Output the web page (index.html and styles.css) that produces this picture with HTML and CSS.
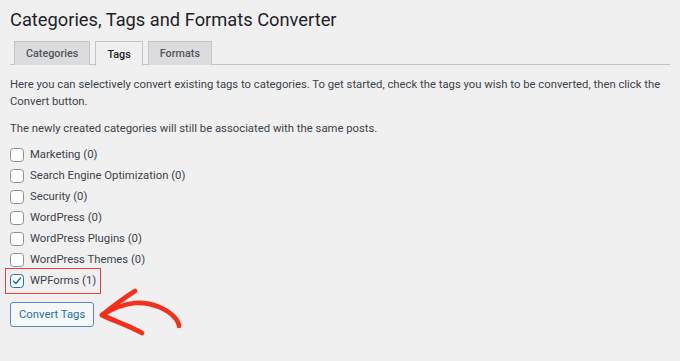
FILE: index.html
```html
<!DOCTYPE html>
<html lang="en">
<head>
<meta charset="utf-8">
<title>Categories, Tags and Formats Converter</title>
<link rel="stylesheet" href="styles.css">
</head>
<body>
<div class="wrap">
  <h1 class="title">Categories, Tags and Formats Converter</h1>
  <nav class="tabs">
    <a class="tab">Categories</a>
    <a class="tab active">Tags</a>
    <a class="tab">Formats</a>
  </nav>
  <p class="intro">Here you can selectively convert existing tags to categories. To get started, check the tags you wish to be converted, then click the Convert button.</p>
  <p class="note">The newly created categories will still be associated with the same posts.</p>
  <ul class="list">
    <li class="item"><span class="box"></span><span>Marketing (0)</span></li>
    <li class="item"><span class="box"></span><span>Search Engine Optimization (0)</span></li>
    <li class="item"><span class="box"></span><span>Security (0)</span></li>
    <li class="item"><span class="box"></span><span>WordPress (0)</span></li>
    <li class="item"><span class="box"></span><span>WordPress Plugins (0)</span></li>
    <li class="item"><span class="box"></span><span>WordPress Themes (0)</span></li>
    <li class="item highlight"><span class="box checked"><svg viewBox="0 0 14 14" width="14" height="14"><path d="M3 7.2 L5.8 10 L11 3.6" fill="none" stroke="#2271b1" stroke-width="1.8" stroke-linecap="round" stroke-linejoin="round"/></svg></span><span>WPForms (1)</span></li>
  </ul>
  <div class="actions">
    <button class="btn">Convert Tags</button>
  </div>
</div>
<svg class="arrow" width="100" height="60" viewBox="90 280 100 60">
  <path d="M102 315 C112 309 122 304 135 303 C152 302 168 309 176 319 C178 322 179 324 179 326" fill="none" stroke="#f2301c" stroke-width="4.6" stroke-linecap="round"/>
  <path d="M135 291 C124 298 112 307 102 315 C112 320 130 326 142 333" fill="none" stroke="#f2301c" stroke-width="4.8" stroke-linecap="round" stroke-linejoin="round"/>
</svg>
</body>
</html>
```
FILE: styles.css
```css
* { box-sizing: border-box; }
html, body { margin: 0; padding: 0; }
body {
  background: #f0f0f1;
  font-family: Roboto, "Liberation Sans", sans-serif;
  color: #3c434a;
  width: 680px;
  height: 361px;
  overflow: hidden;
  position: relative;
}
.wrap { padding: 8px 10px 0 10px; }
.title {
  margin: 0;
  font-size: 18.3px;
  font-weight: 400;
  line-height: 24px;
  color: #1d2327;
}
.tabs {
  display: flex;
  gap: 5px;
  margin-top: 9px;
  padding-left: 4px;
  border-bottom: 1px solid #c3c4c7;
  height: 24px;
}
.tab {
  display: flex;
  align-items: center;
  height: 24px;
  padding: 0 11px;
  background: #dcdcde;
  border: 1px solid #c3c4c7;
  border-bottom: none;
  font-size: 10.8px;
  font-weight: 500;
  color: #50575e;
}
.tab.active {
  background: #f0f0f1;
  color: #1d2327;
  margin-bottom: -1px;
  height: 25px;
}
.intro, .note {
  font-size: 11.3px;
  line-height: 17px;
  margin: 11px 0 0 0;
}
.note { margin-top: 10px; }
.list {
  list-style: none;
  margin: 10px 0 0 0;
  padding: 0;
  display: flex;
  flex-direction: column;
  gap: 5px;
}
.item {
  display: flex;
  align-items: center;
  gap: 6px;
  font-size: 11.3px;
  height: 16px;
  line-height: 16px;
  align-self: flex-start;
}
.box {
  width: 14px;
  height: 14px;
  border: 1px solid #8c8f94;
  border-radius: 3.5px;
  background: #fff;
  display: flex;
  align-items: center;
  justify-content: center;
}
.box.checked { border-color: #2271b1; }
.box svg { display: block; }
.highlight {
  outline: 1.5px solid #e8403a;
  outline-offset: 4px;
}
.actions { margin-top: 13px; }
.btn {
  font-family: inherit;
  font-size: 11.3px;
  color: #2271b1;
  background: #f6f7f7;
  border: 1px solid #5b88bf;
  border-radius: 3px;
  height: 25px;
  padding: 0 8px;
  cursor: pointer;
}
.arrow {
  position: absolute;
  left: 90px;
  top: 280px;
}
```
